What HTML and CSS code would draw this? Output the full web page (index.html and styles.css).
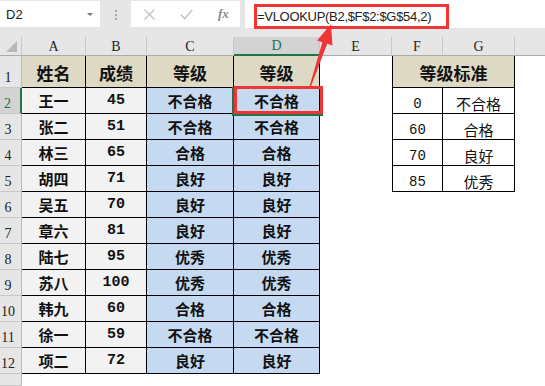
FILE: index.html
```html
<!DOCTYPE html>
<html lang="zh">
<head>
<meta charset="utf-8">
<link rel="stylesheet" href="styles.css">
</head>
<body>
<div class="toolbar">
  <div class="namebox"><span>D2</span><i class="caret"></i></div>
  <div class="dots"><i></i><i></i><i></i></div>
  <div class="fnbox">
    <svg class="ico" width="11" height="11" viewBox="0 0 11 11"><path d="M0.5 0.5L10.5 10.5M10.5 0.5L0.5 10.5" stroke="#c4c4c4" stroke-width="1.4" fill="none"/></svg>
    <svg class="ico" width="13" height="11" viewBox="0 0 13 11"><path d="M0.8 5.8L4.6 9.6L12.2 1" stroke="#c4c4c4" stroke-width="1.6" fill="none"/></svg>
    <span class="fx">fx</span>
  </div>
  <div class="formula"><span class="hl">=VLOOKUP(B2,$F$2:$G$54,2)</span></div>
</div>

<div class="sheet">
  <div class="corner"><i></i></div>
  <div class="ch">A</div><div class="ch">B</div><div class="ch">C</div><div class="ch active">D</div><div class="ch">E</div><div class="ch">F</div><div class="ch">G</div><div class="ch last"></div>

  <div class="rh">1</div>
  <div class="c t">姓名</div><div class="c t">成绩</div><div class="c t">等级</div><div class="c t">等级</div>
  <div class="e"></div><div class="c t lb span2">等级标准</div><div class="e"></div>

  <div class="rh active">2</div>
  <div class="c g">王一</div><div class="c g num">45</div><div class="c b">不合格</div><div class="c b sel">不合格</div>
  <div class="e"></div><div class="c r lb num2">0</div><div class="c r">不合格</div><div class="e"></div>

  <div class="rh">3</div>
  <div class="c g">张二</div><div class="c g num">51</div><div class="c b">不合格</div><div class="c b">不合格</div>
  <div class="e"></div><div class="c r lb num2">60</div><div class="c r">合格</div><div class="e"></div>

  <div class="rh">4</div>
  <div class="c g">林三</div><div class="c g num">65</div><div class="c b">合格</div><div class="c b">合格</div>
  <div class="e"></div><div class="c r lb num2">70</div><div class="c r">良好</div><div class="e"></div>

  <div class="rh">5</div>
  <div class="c g">胡四</div><div class="c g num">71</div><div class="c b">良好</div><div class="c b">良好</div>
  <div class="e"></div><div class="c r lb num2">85</div><div class="c r">优秀</div><div class="e"></div>

  <div class="rh">6</div>
  <div class="c g">吴五</div><div class="c g num">70</div><div class="c b">良好</div><div class="c b">良好</div>
  <div class="e"></div><div class="e"></div><div class="e"></div><div class="e"></div>

  <div class="rh">7</div>
  <div class="c g">章六</div><div class="c g num">81</div><div class="c b">良好</div><div class="c b">良好</div>
  <div class="e"></div><div class="e"></div><div class="e"></div><div class="e"></div>

  <div class="rh">8</div>
  <div class="c g">陆七</div><div class="c g num">95</div><div class="c b">优秀</div><div class="c b">优秀</div>
  <div class="e"></div><div class="e"></div><div class="e"></div><div class="e"></div>

  <div class="rh">9</div>
  <div class="c g">苏八</div><div class="c g num">100</div><div class="c b">优秀</div><div class="c b">优秀</div>
  <div class="e"></div><div class="e"></div><div class="e"></div><div class="e"></div>

  <div class="rh">10</div>
  <div class="c g">韩九</div><div class="c g num">60</div><div class="c b">合格</div><div class="c b">合格</div>
  <div class="e"></div><div class="e"></div><div class="e"></div><div class="e"></div>

  <div class="rh">11</div>
  <div class="c g">徐一</div><div class="c g num">59</div><div class="c b">不合格</div><div class="c b">不合格</div>
  <div class="e"></div><div class="e"></div><div class="e"></div><div class="e"></div>

  <div class="rh">12</div>
  <div class="c g">项二</div><div class="c g num">72</div><div class="c b">良好</div><div class="c b">良好</div>
  <div class="e"></div><div class="e"></div><div class="e"></div><div class="e"></div>

  <div class="rh"></div>
</div>

<svg class="arrow" width="545" height="386" viewBox="0 0 545 386">
  <polygon points="331,24 332.5,45.5 327.2,43.8 310.6,87.3 309.4,86.7 322.3,42.2 317.1,40.5" fill="#ef3535"/>
</svg>
</body>
</html>
```

FILE: styles.css
```css
html, body {
  margin: 0;
  padding: 0;
}
body {
  width: 545px;
  height: 386px;
  overflow: hidden;
  background: #fff;
  position: relative;
  font-family: "Noto Sans CJK SC", "Liberation Sans", sans-serif;
}

/* ---------- formula bar ---------- */
.toolbar {
  display: flex;
  align-items: flex-start;
  height: 37px;
  padding-top: 1px;
  box-sizing: border-box;
  background: #e6e6e6;
}
.namebox {
  width: 100px;
  height: 26px;
  box-sizing: border-box;
  background: #fff;
  display: flex;
  align-items: center;
  padding-left: 6px;
  font: 13px "Liberation Sans", Arial, sans-serif;
  color: #222;
}
.caret {
  margin-left: auto;
  margin-right: 7px;
  width: 0;
  height: 0;
  border-left: 3px solid transparent;
  border-right: 3px solid transparent;
  border-top: 3px solid #777;
}
.dots {
  width: 31px;
  height: 26px;
  display: flex;
  flex-direction: column;
  align-items: center;
  padding-top: 9px;
  box-sizing: border-box;
  gap: 2px;
}
.dots i {
  width: 2px;
  height: 2px;
  background: #a8a8a8;
}
.fnbox {
  width: 109px;
  height: 26px;
  background: #fff;
  display: flex;
  align-items: center;
  padding-left: 13px;
  gap: 25px;
  box-sizing: border-box;
}
.fx {
  font: italic bold 13px "Liberation Serif", serif;
  color: #8a8a8a;
  margin-top: -1px;
}
.formula {
  flex: 1;
  margin-left: 5px;
  margin-top: -1px;
  height: 28px;
  background: #fff;
  padding: 2px 0 0 9px;
  box-sizing: border-box;
}
.hl {
  display: inline-flex;
  align-items: center;
  height: 25px;
  box-sizing: border-box;
  border: 3px solid #ef3535;
  padding: 0 15px 0 0;
  font: 13px "Liberation Sans", Arial, sans-serif;
  letter-spacing: -0.3px;
  color: #222;
}

/* ---------- grid ---------- */
.sheet {
  display: grid;
  grid-template-columns: 22px 64px 61px 87px 86px 72px 51px 72px 1fr;
  grid-template-rows: 19px 32px repeat(11, 26px) 1fr;
  height: 349px;
}
.corner {
  background: #e6e6e6;
  border-right: 1px solid #c6c6c6;
  border-bottom: 1px solid #ababab;
  position: relative;
}
.corner i {
  position: absolute;
  right: 4px;
  bottom: 3px;
  width: 0;
  height: 0;
  border-left: 11px solid transparent;
  border-bottom: 11px solid #b8b8b8;
}
.ch {
  background: #e6e6e6;
  border-right: 1px solid #c8c8c8;
  border-bottom: 1px solid #ababab;
  display: flex;
  align-items: center;
  justify-content: center;
  font: 14px "Liberation Serif", serif;
  color: #222;
  padding-top: 1px;
  box-sizing: border-box;
}
.ch.last {
  border-right: 0;
}
.ch.active {
  background: #d3d3d3;
  color: #217346;
  border-bottom: 2px solid #217346;
}
.rh {
  background: #e6e6e6;
  border-right: 1px solid #bdbdbd;
  border-bottom: 1px solid #c8c8c8;
  display: flex;
  align-items: flex-end;
  justify-content: center;
  padding: 0 5px 2px 0;
  box-sizing: border-box;
  font: 14px "Liberation Serif", serif;
  color: #222;
  line-height: 1;
}
.rh.active {
  background: #d3d3d3;
  color: #217346;
  border-right: 2px solid #217346;
}
.e {
  background: #fff;
}
.c {
  border-right: 1px solid #000;
  border-bottom: 1px solid #000;
  box-sizing: border-box;
  display: flex;
  align-items: center;
  justify-content: center;
  font-weight: bold;
  font-size: 15px;
  line-height: 1;
  color: #111;
  position: relative;
}
.t {
  background: #ddd9c4;
  font-size: 17px;
  padding-top: 2px;
}
.g {
  background: #f2f2f2;
}
.b {
  background: #c5d9f1;
}
.num {
  font-family: "Liberation Mono", monospace;
  font-size: 15px;
}
.r {
  background: #fff;
  font-weight: normal;
  font-size: 15px;
  align-items: flex-end;
  padding-bottom: 2px;
}
.num2 {
  font-family: "Liberation Mono", monospace;
  font-size: 14px;
  padding-bottom: 2px;
}
.lb {
  border-left: 1px solid #000;
}
.span2 {
  grid-column: span 2;
}

/* selected cell + annotation */
.sel::before {
  content: "";
  position: absolute;
  left: -2px;
  top: -1px;
  width: 91px;
  height: 29px;
  border: 2px solid #217346;
  box-sizing: border-box;
  z-index: 2;
}
.sel::after {
  content: "";
  position: absolute;
  left: 0;
  top: -2px;
  width: 89px;
  height: 28px;
  border: 3px solid #ef3535;
  box-sizing: border-box;
  z-index: 3;
}
.arrow {
  position: absolute;
  left: 0;
  top: 0;
  pointer-events: none;
  z-index: 5;
}
```
